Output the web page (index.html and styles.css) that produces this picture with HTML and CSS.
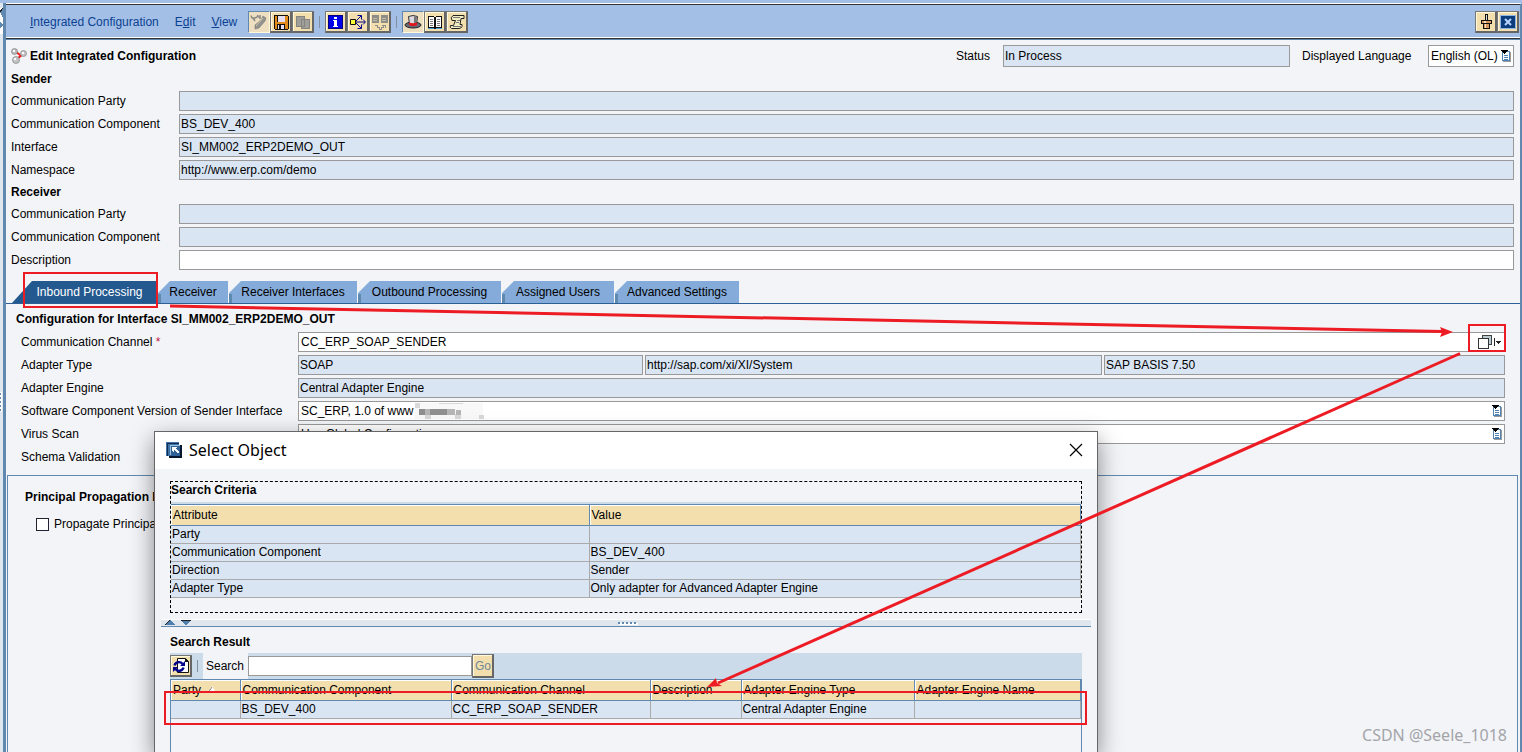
FILE: index.html
```
<!DOCTYPE html>
<html lang="en">
<head>
<meta charset="utf-8">
<title>Edit Integrated Configuration</title>
<link rel="stylesheet" href="styles.css">
</head>
<body>
<svg class="defs" aria-hidden="true">
  <symbol id="list-icon" viewBox="0 0 10 12" shape-rendering="crispEdges">
    <path fill="#9a9a9a" d="M2 2h8v10H2z"/><path fill="#4f83b5" d="M1 1h8v10H1z"/><path fill="#fff" d="M2 2h6v8H2z"/>
    <path fill="#4f83b5" d="M3 5h4v1H3zM3 7h4v1H3zM3 9h4v1H3z"/><path fill="#000" d="M0 0h7v1H6v1H5v1H4v1H3V3H2V2H1V1H0z"/>
  </symbol>
</svg>
<div class="app">
  <aside class="splitbar">
    <svg width="3" height="26" viewBox="0 0 3 26" shape-rendering="crispEdges"><path fill="#fff" d="M0 0h3v26H0z"/><path fill="#6189b0" d="M0 4l3-4v10zM0 14l3 3-3 4z"/><path stroke="#222" d="M0 4l3-4"/></svg>
    <svg width="3" height="20" viewBox="0 0 3 20" shape-rendering="crispEdges"><path fill="#fff" d="M0 0h2v20H0z"/><path fill="#6189b0" d="M0 1h1v2H0zM0 5h1v2H0zM0 9h1v2H0zM0 13h1v2H0zM0 17h1v2H0z"/></svg>
  </aside>
  <main class="window">
    <header class="menubar">
      <nav class="menus">
        <button class="menu"><u>I</u>ntegrated Configuration</button>
        <button class="menu">E<u>d</u>it</button>
        <button class="menu"><u>V</u>iew</button>
      </nav>
      <div class="tools">
        <button class="tool pressed" aria-label="Display and change"><svg viewBox="0 0 18 18"><path fill="none" stroke="#8a8a86" stroke-width="1.500" d="M1 2.500l1 2.500h3l2-1 1-2M3 5l2 3M8 4h2M10 2v4"/><path fill="#92928e" stroke="#777" stroke-width=".6" d="M13 3l3 2-1 3-6 7-4 1 0-4 6-5z"/><path stroke="#cfc5a5" d="M6 13l7-8"/></svg></button>
        <button class="tool" aria-label="Save"><svg viewBox="0 0 18 18" shape-rendering="crispEdges"><path fill="#111" d="M2 2h14v1h1v13h-1v1H3v-1H2z"/><path fill="#e28a1c" d="M3 3h2v13H3zM13 3h3v13h-3zM5 9h8v2H5z"/><path fill="#e5dff0" d="M6 3h7v6H6zM6 12h6v4H6z"/><path fill="#111" d="M7 12h2v4H7z"/></svg></button>
        <button class="tool" aria-label="Copy"><svg viewBox="0 0 18 18" shape-rendering="crispEdges"><path fill="#a09e98" stroke="#86847f" d="M2.500 3.500h8v10h-8zM7.500 6.500h8v9h-8z"/></svg></button>
      </div>
      <i class="sep"></i>
      <div class="tools">
        <button class="tool" aria-label="Information"><svg viewBox="0 0 18 18" shape-rendering="crispEdges"><path fill="#000080" d="M1 2h15v14H1z"/><path fill="#0000e8" d="M2 3h13v12H2z"/><path fill="#fff" d="M7 4h3v2H7zM6 7h4v6h1v1H6v-1h1V8H6z"/></svg></button>
        <button class="tool" aria-label="Where used"><svg viewBox="0 0 18 18"><path fill="#ffff38" stroke="#111" d="M1.500 6.500h5v5h-5z"/><path fill="none" stroke="#00008b" d="M7 9h9M7 8l5-5M7 10l5 5M8.500 2.500h4v4M8.500 15.500h4v-4M14 6.500l2.500 2.500-2.500 2.500"/></svg></button>
        <button class="tool" aria-label="Compare"><svg viewBox="0 0 18 18" shape-rendering="crispEdges"><path fill="#8e8d88" d="M1 2h7v8H1zM10 2h7v8h-7z"/><path stroke="#c2bca7" d="M2 5.500h4M2 7.500h4M11 5.500h4M11 7.500h4"/><path fill="none" stroke="#8e8d88" d="M4 12h2v2h2v2h2v-2h2v-2h2M11 12h3v3"/></svg></button>
      </div>
      <i class="sep"></i>
      <div class="tools">
        <button class="tool pressed" aria-label="Roles"><svg viewBox="0 0 18 18"><ellipse cx="9" cy="12" rx="8" ry="3" fill="#667" stroke="#222"/><path fill="#d9d9df" stroke="#333" d="M4.500 3.500q4.500-2 9 0l-1 8h-7z"/><path fill="#777" d="M10 3l3 1-1 6h-2z"/><path fill="#e3151b" d="M5 9.500q4 1.500 8 0v2.500q-4 2-8 0z"/></svg></button>
        <button class="tool" aria-label="Documentation"><svg viewBox="0 0 18 18" shape-rendering="crispEdges"><path fill="#111" d="M2 3h6v1h2V3h6v12h-6v1H8v-1H2z"/><path fill="#fff" d="M3 4h5v10H3zM10 4h5v10h-5z"/><path stroke="#777" d="M4 6.500h3M4 8.500h3M4 10.500h3M4 12.500h3M11 6.500h3M11 8.500h3M11 10.500h3M11 12.500h3"/><path stroke="#4aa3d8" d="M2 15.500h6M10 15.500h6"/></svg></button>
        <button class="tool" aria-label="Log"><svg viewBox="0 0 18 18"><path fill="#f2edc0" stroke="#222" d="M5 2.500h11v3h-3l-1 6h2v2q-1 2-3 2H3.500q-2-1-1-3h3l2-5H4q-2-3 1-5z"/><path stroke="#777" fill="none" d="M5 4.500h7M9 7.500h3M8 9.500h3M5 13.500h8"/></svg></button>
      </div>
      <div class="tools end">
        <button class="tool" aria-label="Pin"><svg viewBox="0 0 18 18" shape-rendering="crispEdges"><path fill="#111" d="M8 1h3v7H8z"/><path fill="#ddd" d="M9 2h1v5H9z"/><path fill="#111" d="M4 7h11v4h-2v5H6v-5H4z"/><path fill="#d99a62" d="M5 8h9v2H5zM7 11h5v4H7z"/><path fill="#ffe0bd" d="M7 8h2v2H7zM8 11h1v4H8z"/></svg></button>
        <button class="tool" aria-label="Close"><svg viewBox="0 0 18 18"><path fill="#8fb4e6" d="M1 2h16v14H1z"/><path fill="#0d3c7d" d="M2 3h14v12H2z"/><path fill="none" stroke="#b9d4ff" stroke-width="2" d="M6 6l6 6M12 6l-6 6"/></svg></button>
      </div>
    </header>

    <section class="head">
      <div class="titlebar">
        <svg class="title-icon" width="16" height="16" viewBox="0 0 16 16"><path stroke="#f01818" stroke-width="2" d="M4 3l5 4M12 6l-6 5"/><circle cx="3.500" cy="3.500" r="3" fill="#bbb" stroke="#777" stroke-width=".6"/><circle cx="12.500" cy="5.500" r="3" fill="#c4c4c4" stroke="#777" stroke-width=".6"/><circle cx="5" cy="12" r="3.500" fill="#c4c4c4" stroke="#777" stroke-width=".6"/><path fill="#fff" d="M2 2h2v2H2zM11 4h2v2h-2zM3 10h2v2H3z"/></svg>
        <h1>Edit Integrated Configuration</h1>
        <label class="status-label" for="status">Status</label>
        <input id="status" class="field status" value="In Process" readonly>
        <label class="lang-label" for="lang">Displayed Language</label>
        <span class="picker lang"><select id="lang"><option>English (OL)</option></select><svg width="10" height="12"><use href="#list-icon"/></svg></span>
      </div>
      <h2>Sender</h2>
      <div class="row"><label for="sp">Communication Party</label><input id="sp" class="field" readonly></div>
      <div class="row"><label for="sc">Communication Component</label><input id="sc" class="field" value="BS_DEV_400" readonly></div>
      <div class="row"><label for="si">Interface</label><input id="si" class="field" value="SI_MM002_ERP2DEMO_OUT" readonly></div>
      <div class="row"><label for="ns">Namespace</label><input id="ns" class="field" value="http://www.erp.com/demo" readonly></div>
      <h2>Receiver</h2>
      <div class="row"><label for="rp">Communication Party</label><input id="rp" class="field" readonly></div>
      <div class="row"><label for="rc">Communication Component</label><input id="rc" class="field" readonly></div>
      <div class="row"><label for="ds">Description</label><input id="ds" class="field editable"></div>
    </section>

    <div class="tabs" role="tablist">
      <button class="tab active" role="tab" aria-selected="true">Inbound Processing</button>
      <button class="tab t-receiver" role="tab">Receiver</button>
      <button class="tab t-interfaces" role="tab">Receiver Interfaces</button>
      <button class="tab t-outbound" role="tab">Outbound Processing</button>
      <button class="tab t-users" role="tab">Assigned Users</button>
      <button class="tab t-advanced" role="tab">Advanced Settings</button>
    </div>

    <section class="panel">
      <h2>Configuration for Interface SI_MM002_ERP2DEMO_OUT</h2>
      <div class="row"><label for="cc">Communication Channel <span class="req">*</span></label>
        <span class="picker"><input id="cc" value="CC_ERP_SOAP_SENDER"><svg width="24" height="16" viewBox="0 0 24 16" shape-rendering="crispEdges"><path fill="#b9cbd0" stroke="#3b4348" d="M4.500 1.500h9v9h-9z"/><path fill="#fff" stroke="#333" d="M.5 4.500h10v10H.5z"/><path fill="#222" d="M16 4h1v8h-1zM18 7h5v1h-1v1h-1v1h-1V9h-1V8h-1z"/></svg></span></div>
      <div class="row"><label for="at">Adapter Type</label>
        <div class="triple"><input id="at" class="field" value="SOAP" readonly><input class="field" aria-label="Adapter namespace" value="http://sap.com/xi/XI/System" readonly><input class="field" aria-label="Adapter component" value="SAP BASIS 7.50" readonly></div></div>
      <div class="row"><label for="ae">Adapter Engine</label><input id="ae" class="field" value="Central Adapter Engine" readonly></div>
      <div class="row"><label for="sv">Software Component Version of Sender Interface</label>
        <span class="picker"><select id="sv"><option>SC_ERP, 1.0 of www</option></select>
          <svg class="mosaic" width="72" height="16" viewBox="0 0 72 16" shape-rendering="crispEdges"><path fill="#f8f8f8" d="M0 0h68v16H0z"/><path fill="#d8d8d8" d="M0 0h5v5H0zM24 0h24v1H24zM10 12h6v4h-6zM40 11h6v5h-6zM64 12h5v4h-5z"/><path fill="#8f8f8f" d="M4 6h28v6H4z"/><path fill="#b5b5b5" d="M10 6h5v6h-5zM32 6h8v6h-8zM41 7h5v5h-5z"/></svg>
          <svg width="10" height="12"><use href="#list-icon"/></svg></span></div>
      <div class="row"><label for="vs">Virus Scan</label>
        <span class="picker"><select id="vs"><option>Use Global Configuration</option></select><svg width="10" height="12"><use href="#list-icon"/></svg></span></div>
      <div class="row"><span class="label">Schema Validation</span></div>
    </section>

    <section class="principal">
      <h2>Principal Propagation P</h2>
      <label class="check"><input type="checkbox">Propagate Principal</label>
    </section>
  </main>
</div>

<div class="dialog" role="dialog" aria-labelledby="dlg-title">
  <header class="dialog-head">
    <svg width="16" height="16" viewBox="0 0 16 16" shape-rendering="crispEdges"><path fill="#07182e" d="M3 3h13v13H3z"/><path fill="#3f73a8" d="M0 0h13v14H0z"/><path fill="#102c50" d="M1 1h12v1H2v12H1z"/><path fill="#2e6296" d="M4 3h10v11H4z"/><path fill="none" stroke="#9bc0e0" d="M4.500 13V3.500H14"/><path fill="#fff" d="M6 5h5v1h-1v1h1v1h1v1h1v2h-2v-1h-1V9H9V8H8v2H7V9H6z"/></svg>
    <h2 id="dlg-title">Select Object</h2>
    <button class="close" aria-label="Close dialog"><svg width="14" height="14" viewBox="0 0 14 14"><path stroke="#000" stroke-width="1.200" d="M1 1l12 12M13 1L1 13"/></svg></button>
  </header>
  <section class="criteria">
    <h3>Search Criteria</h3>
    <table class="grid">
      <colgroup><col class="c-attr"><col></colgroup>
      <thead><tr><th>Attribute</th><th>Value</th></tr></thead>
      <tbody>
        <tr><td>Party</td><td></td></tr>
        <tr><td>Communication Component</td><td>BS_DEV_400</td></tr>
        <tr><td>Direction</td><td>Sender</td></tr>
        <tr><td>Adapter Type</td><td>Only adapter for Advanced Adapter Engine</td></tr>
      </tbody>
    </table>
  </section>
  <div class="splitter">
    <svg width="26" height="6" viewBox="0 0 26 6" shape-rendering="crispEdges"><path fill="#4f7fae" d="M5 0l5 5H0zM16 0h10l-5 6z"/><path stroke="#222" d="M0 5l5-5M16 .5h10"/></svg>
    <svg width="20" height="3" viewBox="0 0 20 3" shape-rendering="crispEdges"><path fill="#fff" d="M1 1h19v2H1z"/><path fill="#5f8ab2" d="M0 0h2v2H0zM4 0h2v2H4zM8 0h2v2H8zM12 0h2v2h-2zM16 0h2v2h-2z"/></svg>
  </div>
  <section class="result">
    <h3>Search Result</h3>
    <div class="searchbar">
      <button class="tool" aria-label="Refresh"><svg viewBox="0 0 18 18"><path fill="#fff" stroke="#111" d="M5.500 1.500h8l3 3v11h-11z"/><path fill="#111" d="M13 1v4h4z"/><path fill="none" stroke="#00008b" stroke-width="2.400" d="M2.500 8.500a4.500 4.500 0 0 1 8-1.500M11.500 10.500a4.500 4.500 0 0 1-8 1.500"/><path fill="#00008b" d="M13 4v5H8zM1 15v-5h5z"/></svg></button>
      <i class="sep"></i>
      <label for="q">Search</label><input id="q" class="field editable">
      <button class="tool go">Go</button>
    </div>
    <div class="result-list">
      <table class="grid">
        <colgroup><col class="c-party"><col class="c-comp"><col class="c-chan"><col class="c-desc"><col class="c-type"><col></colgroup>
        <thead><tr><th>Party&nbsp; <svg width="9" height="8" viewBox="0 0 9 8"><path fill="#fff" d="M4 0l4 7H0z"/><path stroke="#888" d="M0 7l4-6"/></svg></th><th>Communication Component</th><th>Communication Channel</th><th>Description</th><th>Adapter Engine Type</th><th>Adapter Engine Name</th></tr></thead>
        <tbody><tr><td></td><td>BS_DEV_400</td><td>CC_ERP_SOAP_SENDER</td><td></td><td>Central Adapter Engine</td><td></td></tr></tbody>
      </table>
    </div>
  </section>
</div>

<svg class="marks" width="1522" height="752" viewBox="0 0 1522 752" aria-hidden="true">
  <g fill="none" stroke="#ed1c24" stroke-width="2">
    <path d="M24 273h133v34H24zM1469 325h36v26h-36zM165 692h921v32H165z"/>
    <path stroke-width="3" d="M170 306l1272 25.500M1460 353.500L718 683"/>
  </g>
  <path fill="#ed1c24" d="M1453 332l-13 5 2-5-2-5zM707 687l9-9 1 5 5 3z"/>
</svg>
<p class="credit">CSDN @Seele_1018</p>
</body>
</html>
```
FILE: styles.css
```
* { box-sizing: border-box; }
html, body { height: 100%; }
body {
  margin: 0;
  overflow: hidden;
  position: relative;
  background: #f3f4f8;
  color: #000;
  font: 12px/18px "Liberation Sans", Arial, sans-serif;
}
h1, h2, h3, p { margin: 0; font-size: 12px; line-height: 18px; }
button, input, select { font: inherit; color: inherit; border-radius: 0; margin: 0; }
.defs { display: none; }
label, .label, .menu, .tab { white-space: nowrap; }

.app { display: flex; height: 100%; border-top: 3px solid #a3bfe6; }
.splitbar {
  flex: none;
  width: 6px;
  display: flex;
  flex-direction: column;
  justify-content: space-between;
  background: #dfe6ee;
  border-right: 3px solid #6189b0;
  padding: 5px 0 340px;
}
.window {
  flex: 1;
  min-width: 0;
  border-top: 1px solid #fff;
  border-right: 2px solid #6189b0;
  box-shadow: inset 0 1px #333;
}

.menubar {
  display: flex;
  align-items: center;
  height: 35px;
  margin-top: 1px;
  padding: 1px 1px 2px 20px;
  background: #a3bfe6;
  border-bottom: 1px solid #6189b0;
  box-shadow: inset 0 -1px #333, inset 0 -2px #fff;
}
.menus { display: flex; width: 222px; gap: 16px; padding-left: 4px; }
.menu { border: 0; padding: 0; background: none; color: #0b3f92; }
.tools { display: flex; }
.tools.end { margin-left: auto; }
.tool {
  width: 22px;
  height: 22px;
  padding: 1px;
  border: 1px solid;
  border-color: #777 #666 #666 #777;
  box-shadow: inset -1px -1px #666, inset 1px 1px #fff8dc;
  background: #f3dfae;
}
.tool svg { display: block; width: 18px; height: 18px; }
.tool.pressed { border-color: #5f87b0 #fff8dc #fff8dc #5f87b0; box-shadow: none; background: #eddfc0; }
.sep { flex: none; width: 1px; height: 12px; margin: 0 5px; background: #83909f; }

.head { display: grid; gap: 3px; padding: 5px 6px 0 5px; }
.titlebar { display: flex; align-items: center; height: 22px; }
.title-icon { margin-right: 3px; }
.status-label { width: 47px; margin-left: auto; }
.lang-label { width: 126px; margin-left: 12px; }
.field, .picker {
  display: block;
  width: 100%;
  min-width: 0;
  height: 20px;
  padding: 0 1px;
  border: 1px solid #999;
  background: #d9e5f3;
}
.field.editable, .picker { background: #fff; }
.field.status { width: 287px; height: 22px; }
.titlebar .lang { width: 86px; height: 22px; }
.row { display: grid; grid-template-columns: 168px 1fr; height: 20px; align-items: center; }
.picker { display: flex; align-items: center; padding-right: 2px; }
.picker select, .picker input {
  flex: 1;
  min-width: 0;
  height: 18px;
  padding: 0 1px;
  border: 0;
  background: none;
  appearance: none;
}
.picker svg { flex: none; }
#sv { flex: none; }
.picker .mosaic { margin-right: auto; }

.tabs { display: flex; gap: 1px; margin-top: 11px; padding-left: 6px; height: 23px; border-bottom: 1px solid #2b5f95; }
.tab {
  border: 0;
  padding: 0;
  background: linear-gradient(#5f8ab0, #5f8ab0) 0 100% / 3px 9px no-repeat #84abd9;
  clip-path: polygon(0 12px, 12px 0, 100% 0, 100% 100%, 0 100%);
}
.tab.active { width: 145px; padding-left: 10px; background: #24598f; color: #fff; clip-path: polygon(20px 0, 100% 0, 100% 100%, 0 100%); }
.t-receiver { width: 70px; }
.t-interfaces { width: 128px; }
.t-outbound { width: 143px; }
.t-users { width: 112px; }
.t-advanced { width: 124px; }

.panel { display: grid; gap: 3px; padding: 6px 15px 8px; }
.panel h2 { padding: 0 0 1px; margin-left: -5px; }
.panel .row { grid-template-columns: 277px 1fr; }
.triple { display: grid; grid-template-columns: 345fr 457fr 401fr; gap: 2px; }
.req { color: #c01848; }

.principal { margin: 0 2px 0 1px; height: 300px; padding: 12px 17px; border: 1px solid #6189b0; }
.check { display: flex; align-items: center; gap: 5px; margin: 9px 0 0 11px; }
.check input { appearance: none; width: 13px; height: 13px; border: 1px solid #223; background: #fff; }

.dialog {
  position: absolute;
  left: 154px;
  top: 431px;
  bottom: 0;
  width: 944px;
  display: flex;
  flex-direction: column;
  border: 1px solid #666;
  border-bottom: 0;
  background: #f3f4f8;
  box-shadow: 0 8px 22px rgba(0, 0, 0, .45);
}
.dialog-head { flex: none; display: flex; align-items: center; gap: 7px; height: 37px; padding: 0 14px 1px 11px; background: #fff; }
.dialog-head h2 { font: 16px/22px "Noto Sans", sans-serif; }
.close { margin-left: auto; padding: 0; border: 0; background: none; height: 14px; }
.close svg { display: block; }
.criteria { flex: none; height: 132px; margin: 12px 15px 0; border: 1px dashed #000; }
.criteria h3 { height: 22px; line-height: 16px; border-bottom: 2px solid #cbdbea; }
.grid { width: 100%; table-layout: fixed; border-collapse: collapse; }
.grid th {
  height: 21px;
  padding: 0 2px;
  border: 1px solid #6189b0;
  box-shadow: inset 1px 1px #fff;
  background: #f3dfae;
  font-weight: 400;
  text-align: left;
  white-space: nowrap;
}
.grid td { height: 18px; line-height: 17px; padding: 0 1px; border: 1px solid #aaa; background: #d9e5f3; white-space: nowrap; }
.grid th:first-child, .grid td:first-child { border-left: 0; }
.c-attr { width: 418px; }
.c-party { width: 69px; }
.c-comp { width: 211px; }
.c-chan { width: 199px; }
.c-desc { width: 91px; }
.c-type { width: 173px; }
.splitter {
  flex: none;
  display: grid;
  grid-template-columns: 1fr auto 1fr;
  align-items: center;
  height: 8px;
  margin: 6px 6px 0;
  padding-left: 4px;
  border-top: 1px solid #fff;
  border-bottom: 1px solid #6189b0;
  background: #dfe6ee;
}
.result { flex: 1; min-height: 0; display: flex; flex-direction: column; margin: 6px 15px 0; }
.searchbar { flex: none; display: flex; align-items: center; height: 26px; margin-top: 2px; background: #cbdbea; }
.searchbar label { align-self: stretch; padding: 4px 3px 0; background: #f3f4f8; width: 45px; }
.searchbar .field { width: 224px; }
.searchbar .go { height: 24px; padding: 0; color: #6f8795; }
.result-list { flex: 1; border: solid #6189b0; border-width: 0 1px; }

.marks { position: absolute; left: 0; top: 0; pointer-events: none; }
.credit { position: absolute; right: 15px; bottom: 7px; color: #a3a4a8; font: 16px/20px "Noto Sans", sans-serif; }
```
